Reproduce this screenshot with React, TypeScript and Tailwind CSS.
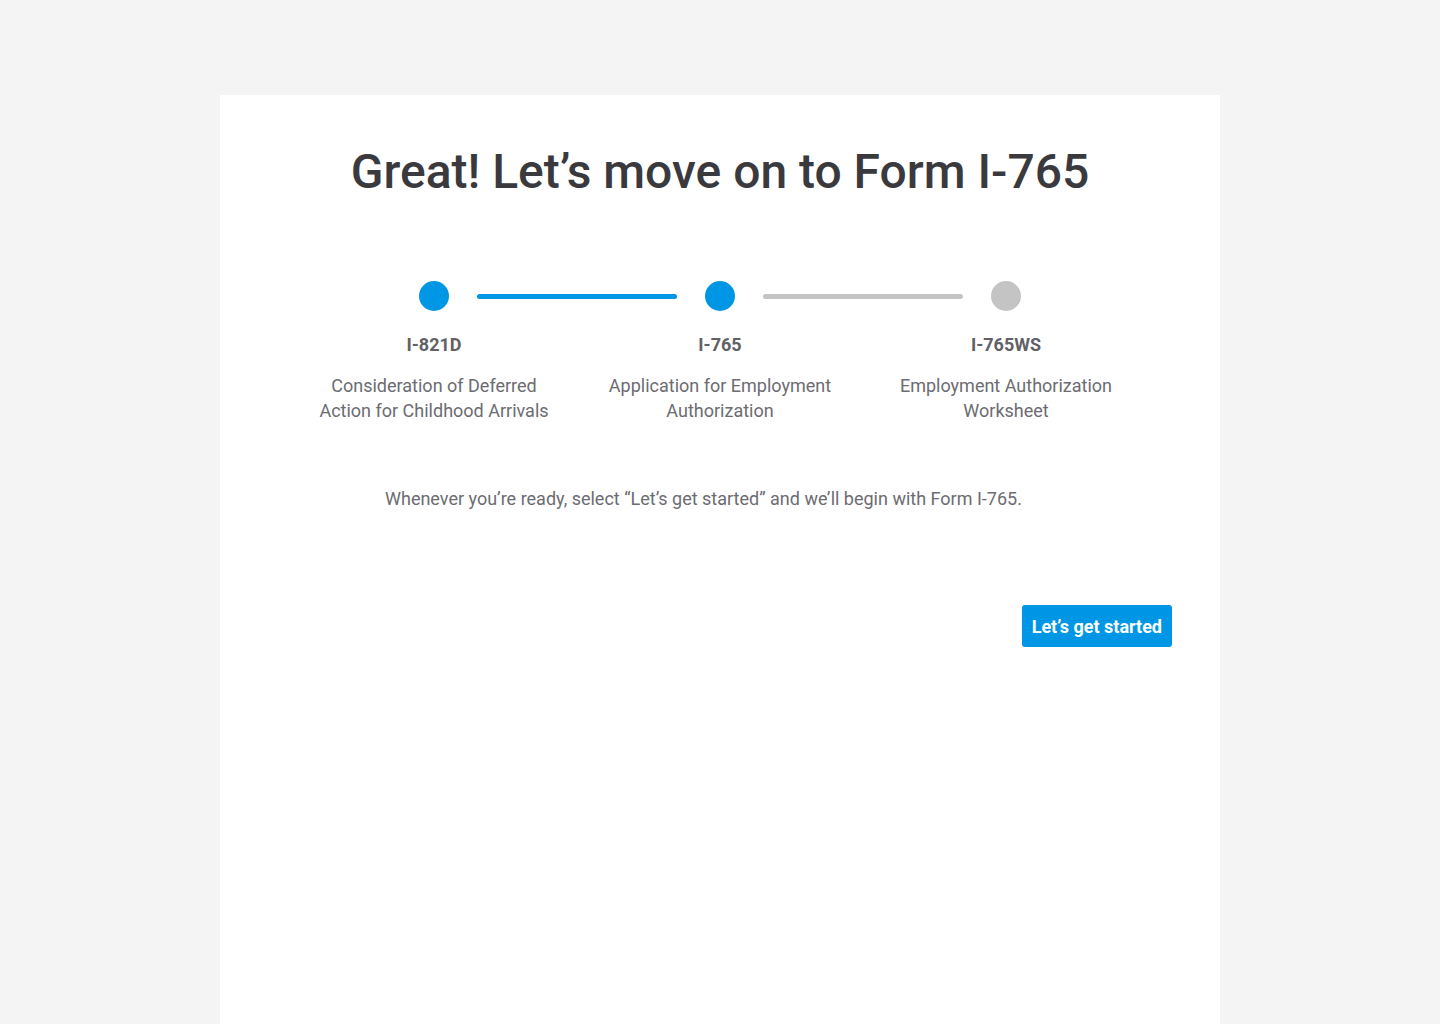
const steps = [
  { code: 'I-821D', title: 'Consideration of Deferred Action for Childhood Arrivals', done: true },
  { code: 'I-765', title: 'Application for Employment Authorization', done: true },
  { code: 'I-765WS', title: 'Employment Authorization Worksheet', done: false },
];

function Stepper() {
  return (
    <div className="mx-auto w-[858px]">
      <div className="grid grid-cols-3">
        {steps.map((step, i) => (
          <div key={step.code} className="relative flex h-[30px] justify-center">
            <span className={`h-[30px] w-[30px] rounded-full ${step.done ? 'bg-[#0096e6]' : 'bg-[#c4c4c4]'}`} />
            {i < steps.length - 1 && (
              <span
                className={`absolute left-[186px] top-[12.5px] h-[5px] w-[200px] rounded-full ${
                  steps[i + 1].done ? 'bg-[#0096e6]' : 'bg-[#c4c4c4]'
                }`}
              />
            )}
          </div>
        ))}
      </div>
      <div className="mt-[22px] grid grid-cols-3">
        {steps.map((step) => (
          <div key={step.code} className="flex flex-col items-center text-center">
            <div className="text-[18px] font-bold leading-[24px] text-[#616166]">{step.code}</div>
            <p className="mt-[16px] px-[20px] text-[18px] leading-[25px] text-[#6c6c72]">{step.title}</p>
          </div>
        ))}
      </div>
    </div>
  );
}

export default function App() {
  return (
    <main className="min-h-screen bg-[#f4f4f4] pt-[95px]" style={{ fontFamily: 'Roboto, "Liberation Sans", sans-serif' }}>
      <section className="mx-auto min-h-[929px] w-[1000px] bg-white pt-[45px] pb-20">
        <h1 className="text-center text-[48px] font-medium leading-[64px] text-[#3a3a3e]">
          Great! Let’s move on to Form I-765
        </h1>

        <div className="mt-[77px]">
          <Stepper />
        </div>

        <p className="mt-[63px] pl-[165px] text-[18px] leading-[25px] text-[#6c6c72]">
          Whenever you’re ready, select “Let’s get started” and we’ll begin with Form I-765.
        </p>

        <div className="mt-[94px] flex justify-end pr-[48px]">
          <button className="h-[42px] rounded-[3px] bg-[#0096e6] px-[10px] text-[18px] font-bold text-white">
            Let’s get started
          </button>
        </div>
      </section>
    </main>
  );
}
